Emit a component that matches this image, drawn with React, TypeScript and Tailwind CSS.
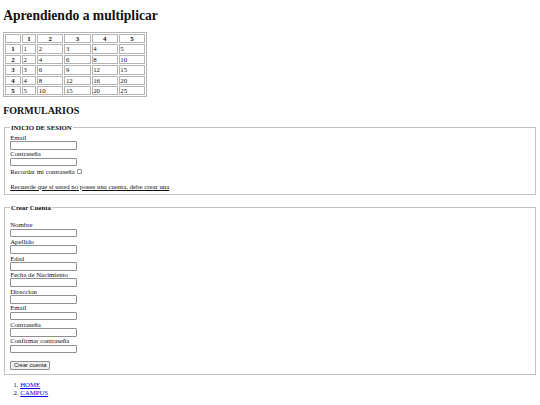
const nums = [1, 2, 3, 4, 5];

const cellCls = "border border-[#b4b4b4] p-0 leading-[7.4px]";

function Field({ label }: { label: string }) {
  return (
    <>
      <div>{label}</div>
      <input
        type="text"
        className="mb-[0.6px] block h-[8.6px] w-[66.4px] rounded-[1px] border border-[#8f8f8f] bg-white"
      />
    </>
  );
}

export default function App() {
  return (
    <div className="m-[3.2px] bg-white font-['Liberation_Serif','Times_New_Roman',serif] text-[6.8px] leading-[7.36px] text-[#111]">
      <h1 className="my-[8.58px] text-[13.6px] leading-[14.72px] font-bold">Aprendiendo a multiplicar</h1>

      <table className="border-separate border-spacing-[1px] border border-[#b4b4b4]">
        <thead>
          <tr>
            <th className={`${cellCls} w-[15.6px]`}></th>
            {nums.map((n) => (
              <th
                key={n}
                className={`${cellCls} ${n === 1 ? "w-[14.4px]" : "w-[26.2px]"} text-center font-bold`}
              >
                {n}
              </th>
            ))}
          </tr>
        </thead>
        <tbody>
          {nums.map((r) => (
            <tr key={r}>
              <th className={`${cellCls} text-center font-bold`}>{r}</th>
              {nums.map((c) => (
                <td key={c} className={`${cellCls} pl-[0.6px] text-left`}>
                  {r * c}
                </td>
              ))}
            </tr>
          ))}
        </tbody>
      </table>

      <h2 className="my-[7.97px] text-[10px] leading-[11.04px] font-bold">FORMULARIOS</h2>

      <form>
        <fieldset className="mx-[0.8px] border border-[#c2c2c2] px-[5.2px] pt-[2.24px] pb-[4.4px]">
          <legend className="px-[0.8px] font-bold">INICIO DE SESION</legend>
          <Field label="Email" />
          <Field label="Contraseña" />
          <div className="flex h-[8.4px] items-center">
            Recordar mi contraseña
            <input
              type="checkbox"
              className="ml-[2.4px] h-[5.2px] w-[5.2px] appearance-none rounded-[1px] border border-[#8f8f8f] bg-white"
            />
          </div>
          <div className="h-[7.36px]" />
          <u>Recuerde que si usted no posee una cuenta, debe crear una</u>
        </fieldset>
      </form>

      <form className="mt-[8.4px]">
        <fieldset className="mx-[0.8px] border border-[#c2c2c2] px-[5.2px] pt-[2.24px] pb-[4.4px]">
          <legend className="px-[0.8px] font-bold">Crear Cuenta</legend>
          <div className="h-[8px]" />
          <Field label="Nombre" />
          <Field label="Apellido" />
          <Field label="Edad" />
          <Field label="Fecha de Nacimiento" />
          <Field label="Direccion" />
          <Field label="Email" />
          <Field label="Contraseña" />
          <Field label="Confirmar contraseña" />
          <div className="h-[7.36px]" />
          <button
            type="button"
            className="block h-[8.5px] rounded-[1px] border border-[#8f8f8f] bg-[#efefef] px-[2.8px] font-['Liberation_Sans',Arial,sans-serif] text-[5.6px] leading-[6px]"
          >
            Crear cuenta
          </button>
        </fieldset>
      </form>

      <ol className="my-[6.4px] list-decimal pl-[17px]">
        <li>
          <a href="#" className="text-[#0000ee] underline">HOME</a>
        </li>
        <li>
          <a href="#" className="text-[#0000ee] underline">CAMPUS</a>
        </li>
      </ol>
    </div>
  );
}
